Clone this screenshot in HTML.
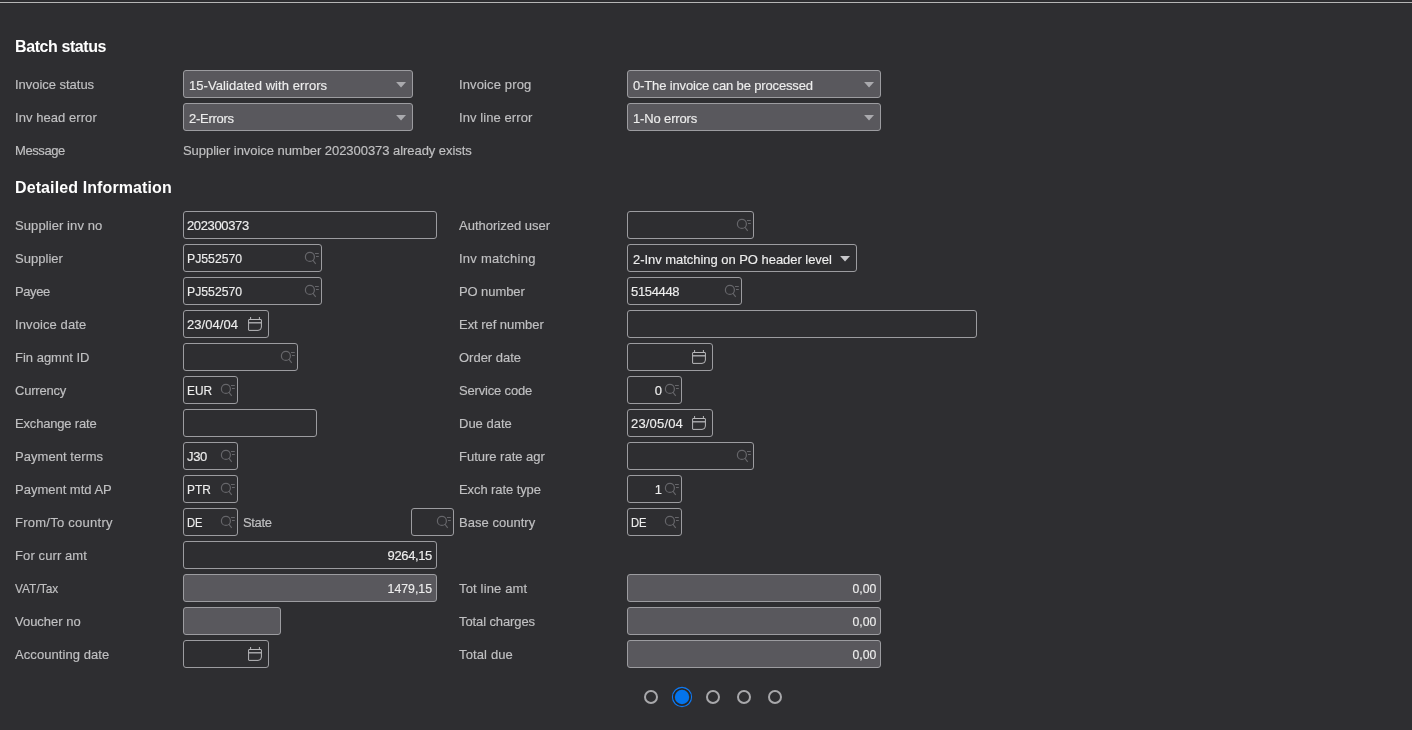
<!DOCTYPE html>
<html><head><meta charset="utf-8"><style>
html,body{margin:0;padding:0;}
body{width:1412px;height:730px;background:#2e2e31;position:relative;overflow:hidden;font-family:"Liberation Sans",sans-serif;}
#wrap{position:absolute;left:0;top:0;width:1412px;height:730px;will-change:transform;}
.tl{position:absolute;left:0;top:1px;width:1412px;height:3px;background:#2d2d30;}
.tl i{position:absolute;left:0;top:1px;width:100%;height:1px;background:#b6b6b6;}
.hd{position:absolute;color:#ffffff;font-weight:700;font-size:16px;white-space:nowrap;line-height:24px;}
.lb{position:absolute;color:#c0c0c2;font-size:13px;line-height:28px;white-space:nowrap;-webkit-text-stroke:0.15px #c0c0c2;}
.bx{position:absolute;box-sizing:border-box;height:28px;border:1px solid #9c9ca0;border-radius:3px;background:#2e2e31;}
.bx.gray{background:#59585d;}
.tv{position:absolute;line-height:28px;font-size:13px;color:#ededed;white-space:nowrap;-webkit-text-stroke:0.15px #ededed;}
</style></head><body><div id="wrap">
<div class="tl"><i></i></div>
<div class="hd" style="left:15px;top:35px;letter-spacing:-0.411px">Batch status</div><div class="hd" style="left:15px;top:176px;letter-spacing:0.11px">Detailed Information</div><div class="lb" style="left:15px;top:71px;letter-spacing:-0.03px">Invoice status</div><div class="bx gray" style="left:183px;top:70px;width:230px"><span class="tv" style="left:5px;top:1px;letter-spacing:0.077px">15-Validated with errors</span><svg width="28" height="28" viewBox="0 0 28 28" style="position:absolute;right:-1px;top:-1px"><path d="M11.1 12.1 H21 L16.05 17.5 Z" fill="#aaaaae"/></svg></div><div class="lb" style="left:459px;top:71px;letter-spacing:0.128px">Invoice prog</div><div class="bx gray" style="left:627px;top:70px;width:254px"><span class="tv" style="left:5px;top:1px;letter-spacing:-0.146px">0-The invoice can be processed</span><svg width="28" height="28" viewBox="0 0 28 28" style="position:absolute;right:-1px;top:-1px"><path d="M11.1 12.1 H21 L16.05 17.5 Z" fill="#aaaaae"/></svg></div><div class="lb" style="left:15px;top:104px;letter-spacing:0.061px">Inv head error</div><div class="bx gray" style="left:183px;top:103px;width:230px"><span class="tv" style="left:5px;top:1px;letter-spacing:-0.264px">2-Errors</span><svg width="28" height="28" viewBox="0 0 28 28" style="position:absolute;right:-1px;top:-1px"><path d="M11.1 12.1 H21 L16.05 17.5 Z" fill="#aaaaae"/></svg></div><div class="lb" style="left:459px;top:104px;letter-spacing:0.083px">Inv line error</div><div class="bx gray" style="left:627px;top:103px;width:254px"><span class="tv" style="left:5px;top:1px;letter-spacing:-0.144px">1-No errors</span><svg width="28" height="28" viewBox="0 0 28 28" style="position:absolute;right:-1px;top:-1px"><path d="M11.1 12.1 H21 L16.05 17.5 Z" fill="#aaaaae"/></svg></div><div class="lb" style="left:15px;top:137px;letter-spacing:-0.42px">Message</div><div class="lb" style="left:183px;top:137px;letter-spacing:-0.052px">Supplier invoice number 202300373 already exists</div><div class="lb" style="left:15px;top:212px;letter-spacing:0.088px">Supplier inv no</div><div class="bx" style="left:183px;top:211px;width:254px"><span class="tv" style="left:3px;top:0px;letter-spacing:-0.355px">202300373</span></div><div class="lb" style="left:459px;top:212px;letter-spacing:-0.002px">Authorized user</div><div class="bx" style="left:627px;top:211px;width:127px"><svg width="28" height="28" viewBox="0 0 28 28" style="position:absolute;right:-1px;top:-1px"><circle cx="15.9" cy="12.9" r="4.5" fill="none" stroke="#66666a" stroke-width="1.2"/><path d="M18.7 16.0 L21.7 19.8" stroke="#66666a" stroke-width="1.2" fill="none"/><path d="M21 9.5 H24.8 M22 12.5 H24.8" stroke="#66666a" stroke-width="1" fill="none"/></svg></div><div class="lb" style="left:15px;top:245px;letter-spacing:0.033px">Supplier</div><div class="bx" style="left:183px;top:244px;width:139px"><span class="tv" style="left:3px;top:0px;transform:scaleX(0.9421);transform-origin:left center">PJ552570</span><svg width="28" height="28" viewBox="0 0 28 28" style="position:absolute;right:-1px;top:-1px"><circle cx="15.9" cy="12.9" r="4.5" fill="none" stroke="#66666a" stroke-width="1.2"/><path d="M18.7 16.0 L21.7 19.8" stroke="#66666a" stroke-width="1.2" fill="none"/><path d="M21 9.5 H24.8 M22 12.5 H24.8" stroke="#66666a" stroke-width="1" fill="none"/></svg></div><div class="lb" style="left:459px;top:245px;letter-spacing:0.248px">Inv matching</div><div class="bx" style="left:627px;top:244px;width:230px"><span class="tv" style="left:5px;top:1px;letter-spacing:-0.04px">2-Inv matching on PO header level</span><svg width="28" height="28" viewBox="0 0 28 28" style="position:absolute;right:-1px;top:-1px"><path d="M11.1 12.1 H21 L16.05 17.5 Z" fill="#c8c8cb"/></svg></div><div class="lb" style="left:15px;top:278px;letter-spacing:-0.408px">Payee</div><div class="bx" style="left:183px;top:277px;width:139px"><span class="tv" style="left:3px;top:0px;transform:scaleX(0.9421);transform-origin:left center">PJ552570</span><svg width="28" height="28" viewBox="0 0 28 28" style="position:absolute;right:-1px;top:-1px"><circle cx="15.9" cy="12.9" r="4.5" fill="none" stroke="#66666a" stroke-width="1.2"/><path d="M18.7 16.0 L21.7 19.8" stroke="#66666a" stroke-width="1.2" fill="none"/><path d="M21 9.5 H24.8 M22 12.5 H24.8" stroke="#66666a" stroke-width="1" fill="none"/></svg></div><div class="lb" style="left:459px;top:278px;letter-spacing:-0.093px">PO number</div><div class="bx" style="left:627px;top:277px;width:115px"><span class="tv" style="left:3px;top:0px;letter-spacing:-0.347px">5154448</span><svg width="28" height="28" viewBox="0 0 28 28" style="position:absolute;right:-1px;top:-1px"><circle cx="15.9" cy="12.9" r="4.5" fill="none" stroke="#66666a" stroke-width="1.2"/><path d="M18.7 16.0 L21.7 19.8" stroke="#66666a" stroke-width="1.2" fill="none"/><path d="M21 9.5 H24.8 M22 12.5 H24.8" stroke="#66666a" stroke-width="1" fill="none"/></svg></div><div class="lb" style="left:15px;top:311px;letter-spacing:0.102px">Invoice date</div><div class="bx" style="left:183px;top:310px;width:86px"><span class="tv" style="left:3px;top:0px;letter-spacing:0.061px">23/04/04</span><svg width="28" height="28" viewBox="0 0 28 28" style="position:absolute;right:-1px;top:-1px"><path d="M8 9.5 H20 Q20.4 9.5 20.4 9.9 V17 Q20.4 20.4 17 20.4 H8 Q7.6 20.4 7.6 20 V9.9 Q7.6 9.5 8 9.5 Z" fill="none" stroke="#b8b8bb" stroke-width="1"/><path d="M7.6 12.8 H20.4" stroke="#b8b8bb" stroke-width="1.3"/><path d="M9.6 7 V9.5 M18.4 7 V9.5" stroke="#b8b8bb" stroke-width="1"/></svg></div><div class="lb" style="left:459px;top:311px;letter-spacing:-0.04px">Ext ref number</div><div class="bx" style="left:627px;top:310px;width:350px"></div><div class="lb" style="left:15px;top:344px;letter-spacing:-0.002px">Fin agmnt ID</div><div class="bx" style="left:183px;top:343px;width:115px"><svg width="28" height="28" viewBox="0 0 28 28" style="position:absolute;right:-1px;top:-1px"><circle cx="15.9" cy="12.9" r="4.5" fill="none" stroke="#66666a" stroke-width="1.2"/><path d="M18.7 16.0 L21.7 19.8" stroke="#66666a" stroke-width="1.2" fill="none"/><path d="M21 9.5 H24.8 M22 12.5 H24.8" stroke="#66666a" stroke-width="1" fill="none"/></svg></div><div class="lb" style="left:459px;top:344px;letter-spacing:-0.013px">Order date</div><div class="bx" style="left:627px;top:343px;width:86px"><svg width="28" height="28" viewBox="0 0 28 28" style="position:absolute;right:-1px;top:-1px"><path d="M8 9.5 H20 Q20.4 9.5 20.4 9.9 V17 Q20.4 20.4 17 20.4 H8 Q7.6 20.4 7.6 20 V9.9 Q7.6 9.5 8 9.5 Z" fill="none" stroke="#b8b8bb" stroke-width="1"/><path d="M7.6 12.8 H20.4" stroke="#b8b8bb" stroke-width="1.3"/><path d="M9.6 7 V9.5 M18.4 7 V9.5" stroke="#b8b8bb" stroke-width="1"/></svg></div><div class="lb" style="left:15px;top:377px;letter-spacing:-0.219px">Currency</div><div class="bx" style="left:183px;top:376px;width:55px"><span class="tv" style="left:3px;top:0px;transform:scaleX(0.9133);transform-origin:left center">EUR</span><svg width="28" height="28" viewBox="0 0 28 28" style="position:absolute;right:-1px;top:-1px"><circle cx="15.9" cy="12.9" r="4.5" fill="none" stroke="#66666a" stroke-width="1.2"/><path d="M18.7 16.0 L21.7 19.8" stroke="#66666a" stroke-width="1.2" fill="none"/><path d="M21 9.5 H24.8 M22 12.5 H24.8" stroke="#66666a" stroke-width="1" fill="none"/></svg></div><div class="lb" style="left:459px;top:377px;letter-spacing:-0.175px">Service code</div><div class="bx" style="left:627px;top:376px;width:55px"><span class="tv" style="right:19px;top:0px;">0</span><svg width="28" height="28" viewBox="0 0 28 28" style="position:absolute;right:-1px;top:-1px"><circle cx="15.9" cy="12.9" r="4.5" fill="none" stroke="#66666a" stroke-width="1.2"/><path d="M18.7 16.0 L21.7 19.8" stroke="#66666a" stroke-width="1.2" fill="none"/><path d="M21 9.5 H24.8 M22 12.5 H24.8" stroke="#66666a" stroke-width="1" fill="none"/></svg></div><div class="lb" style="left:15px;top:410px;letter-spacing:-0.175px">Exchange rate</div><div class="bx" style="left:183px;top:409px;width:134px"></div><div class="lb" style="left:459px;top:410px;letter-spacing:-0.005px">Due date</div><div class="bx" style="left:627px;top:409px;width:86px"><span class="tv" style="left:3px;top:0px;letter-spacing:0.175px">23/05/04</span><svg width="28" height="28" viewBox="0 0 28 28" style="position:absolute;right:-1px;top:-1px"><path d="M8 9.5 H20 Q20.4 9.5 20.4 9.9 V17 Q20.4 20.4 17 20.4 H8 Q7.6 20.4 7.6 20 V9.9 Q7.6 9.5 8 9.5 Z" fill="none" stroke="#b8b8bb" stroke-width="1"/><path d="M7.6 12.8 H20.4" stroke="#b8b8bb" stroke-width="1.3"/><path d="M9.6 7 V9.5 M18.4 7 V9.5" stroke="#b8b8bb" stroke-width="1"/></svg></div><div class="lb" style="left:15px;top:443px;letter-spacing:0.057px">Payment terms</div><div class="bx" style="left:183px;top:442px;width:55px"><span class="tv" style="left:3px;top:0px;letter-spacing:-0.365px">J30</span><svg width="28" height="28" viewBox="0 0 28 28" style="position:absolute;right:-1px;top:-1px"><circle cx="15.9" cy="12.9" r="4.5" fill="none" stroke="#66666a" stroke-width="1.2"/><path d="M18.7 16.0 L21.7 19.8" stroke="#66666a" stroke-width="1.2" fill="none"/><path d="M21 9.5 H24.8 M22 12.5 H24.8" stroke="#66666a" stroke-width="1" fill="none"/></svg></div><div class="lb" style="left:459px;top:443px;letter-spacing:-0.011px">Future rate agr</div><div class="bx" style="left:627px;top:442px;width:127px"><svg width="28" height="28" viewBox="0 0 28 28" style="position:absolute;right:-1px;top:-1px"><circle cx="15.9" cy="12.9" r="4.5" fill="none" stroke="#66666a" stroke-width="1.2"/><path d="M18.7 16.0 L21.7 19.8" stroke="#66666a" stroke-width="1.2" fill="none"/><path d="M21 9.5 H24.8 M22 12.5 H24.8" stroke="#66666a" stroke-width="1" fill="none"/></svg></div><div class="lb" style="left:15px;top:476px;letter-spacing:-0.005px">Payment mtd AP</div><div class="bx" style="left:183px;top:475px;width:55px"><span class="tv" style="left:3px;top:0px;transform:scaleX(0.9143);transform-origin:left center">PTR</span><svg width="28" height="28" viewBox="0 0 28 28" style="position:absolute;right:-1px;top:-1px"><circle cx="15.9" cy="12.9" r="4.5" fill="none" stroke="#66666a" stroke-width="1.2"/><path d="M18.7 16.0 L21.7 19.8" stroke="#66666a" stroke-width="1.2" fill="none"/><path d="M21 9.5 H24.8 M22 12.5 H24.8" stroke="#66666a" stroke-width="1" fill="none"/></svg></div><div class="lb" style="left:459px;top:476px;letter-spacing:-0.09px">Exch rate type</div><div class="bx" style="left:627px;top:475px;width:55px"><span class="tv" style="right:19px;top:0px;">1</span><svg width="28" height="28" viewBox="0 0 28 28" style="position:absolute;right:-1px;top:-1px"><circle cx="15.9" cy="12.9" r="4.5" fill="none" stroke="#66666a" stroke-width="1.2"/><path d="M18.7 16.0 L21.7 19.8" stroke="#66666a" stroke-width="1.2" fill="none"/><path d="M21 9.5 H24.8 M22 12.5 H24.8" stroke="#66666a" stroke-width="1" fill="none"/></svg></div><div class="lb" style="left:15px;top:509px;letter-spacing:0.256px">From/To country</div><div class="bx" style="left:183px;top:508px;width:55px"><span class="tv" style="left:3px;top:0px;transform:scaleX(0.8626);transform-origin:left center">DE</span><svg width="28" height="28" viewBox="0 0 28 28" style="position:absolute;right:-1px;top:-1px"><circle cx="15.9" cy="12.9" r="4.5" fill="none" stroke="#66666a" stroke-width="1.2"/><path d="M18.7 16.0 L21.7 19.8" stroke="#66666a" stroke-width="1.2" fill="none"/><path d="M21 9.5 H24.8 M22 12.5 H24.8" stroke="#66666a" stroke-width="1" fill="none"/></svg></div><div class="lb" style="left:459px;top:509px;letter-spacing:0.03px">Base country</div><div class="bx" style="left:627px;top:508px;width:55px"><span class="tv" style="left:3px;top:0px;transform:scaleX(0.8626);transform-origin:left center">DE</span><svg width="28" height="28" viewBox="0 0 28 28" style="position:absolute;right:-1px;top:-1px"><circle cx="15.9" cy="12.9" r="4.5" fill="none" stroke="#66666a" stroke-width="1.2"/><path d="M18.7 16.0 L21.7 19.8" stroke="#66666a" stroke-width="1.2" fill="none"/><path d="M21 9.5 H24.8 M22 12.5 H24.8" stroke="#66666a" stroke-width="1" fill="none"/></svg></div><div class="lb" style="left:15px;top:542px;letter-spacing:0.103px">For curr amt</div><div class="bx" style="left:183px;top:541px;width:254px"><span class="tv" style="right:4px;top:0px;letter-spacing:-0.36px">9264,15</span></div><div class="lb" style="left:15px;top:575px;transform:scaleX(0.9163);transform-origin:left center">VAT/Tax</div><div class="bx gray" style="left:183px;top:574px;width:254px"><span class="tv" style="right:4px;top:0px;transform:scaleX(0.9453);transform-origin:right center">1479,15</span></div><div class="lb" style="left:459px;top:575px;letter-spacing:0.158px">Tot line amt</div><div class="bx gray" style="left:627px;top:574px;width:254px"><span class="tv" style="right:4px;top:0px;transform:scaleX(0.9414);transform-origin:right center">0,00</span></div><div class="lb" style="left:15px;top:608px;letter-spacing:-0.016px">Voucher no</div><div class="bx gray" style="left:183px;top:607px;width:98px"></div><div class="lb" style="left:459px;top:608px;letter-spacing:-0.102px">Total charges</div><div class="bx gray" style="left:627px;top:607px;width:254px"><span class="tv" style="right:4px;top:0px;transform:scaleX(0.9414);transform-origin:right center">0,00</span></div><div class="lb" style="left:15px;top:641px;letter-spacing:0.071px">Accounting date</div><div class="bx" style="left:183px;top:640px;width:86px"><svg width="28" height="28" viewBox="0 0 28 28" style="position:absolute;right:-1px;top:-1px"><path d="M8 9.5 H20 Q20.4 9.5 20.4 9.9 V17 Q20.4 20.4 17 20.4 H8 Q7.6 20.4 7.6 20 V9.9 Q7.6 9.5 8 9.5 Z" fill="none" stroke="#b8b8bb" stroke-width="1"/><path d="M7.6 12.8 H20.4" stroke="#b8b8bb" stroke-width="1.3"/><path d="M9.6 7 V9.5 M18.4 7 V9.5" stroke="#b8b8bb" stroke-width="1"/></svg></div><div class="lb" style="left:459px;top:641px;letter-spacing:0.134px">Total due</div><div class="bx gray" style="left:627px;top:640px;width:254px"><span class="tv" style="right:4px;top:0px;transform:scaleX(0.9414);transform-origin:right center">0,00</span></div><div class="lb" style="left:243px;top:509px;letter-spacing:-0.331px">State</div><div class="bx" style="left:411px;top:508px;width:43px"><svg width="28" height="28" viewBox="0 0 28 28" style="position:absolute;right:-1px;top:-1px"><circle cx="15.9" cy="12.9" r="4.5" fill="none" stroke="#66666a" stroke-width="1.2"/><path d="M18.7 16.0 L21.7 19.8" stroke="#66666a" stroke-width="1.2" fill="none"/><path d="M21 9.5 H24.8 M22 12.5 H24.8" stroke="#66666a" stroke-width="1" fill="none"/></svg></div><svg style="position:absolute;left:620px;top:670px" width="180" height="55" viewBox="0 0 180 55"><circle cx="31" cy="27" r="6" fill="none" stroke="#a8a8ab" stroke-width="2"/><circle cx="62" cy="27" r="9.5" fill="none" stroke="#0f78f0" stroke-width="1.3"/><circle cx="62" cy="27" r="8.2" fill="none" stroke="#2a2622" stroke-width="1.2"/><circle cx="62" cy="27" r="7.2" fill="#0474ec"/><circle cx="93" cy="27" r="6" fill="none" stroke="#a8a8ab" stroke-width="2"/><circle cx="124" cy="27" r="6" fill="none" stroke="#a8a8ab" stroke-width="2"/><circle cx="155" cy="27" r="6" fill="none" stroke="#a8a8ab" stroke-width="2"/></svg>
</div></body></html>
